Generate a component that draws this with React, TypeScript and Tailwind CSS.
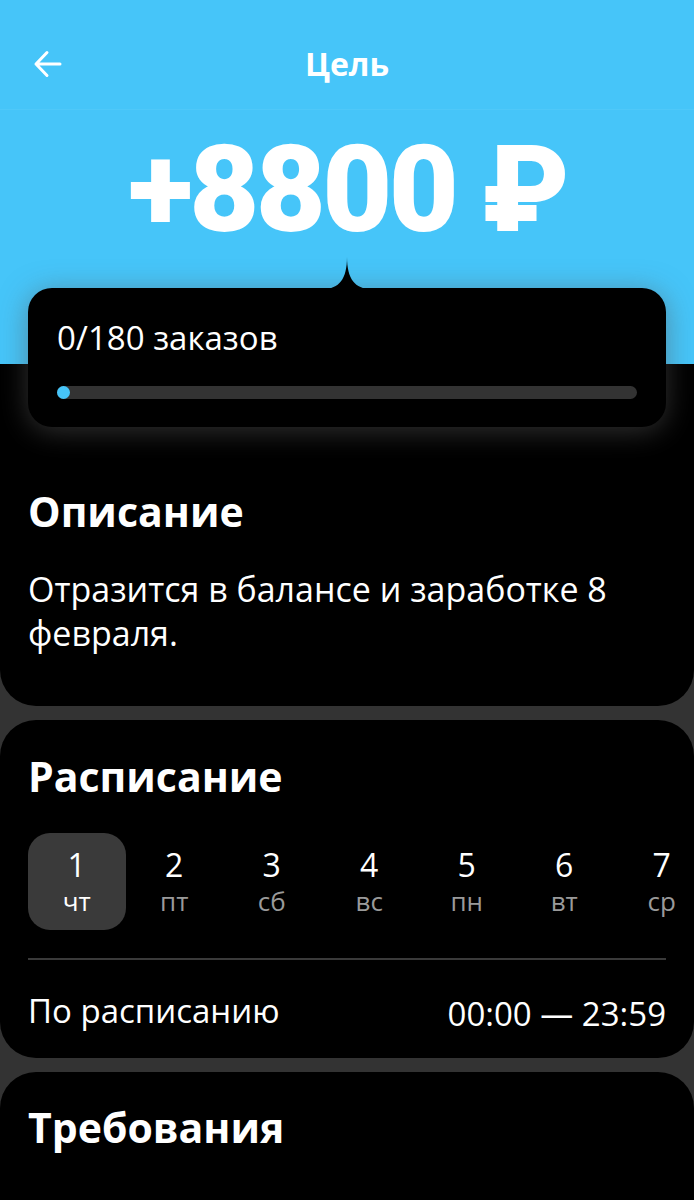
import React from 'react';

const DAYS = [
  { n: '1', d: 'чт' },
  { n: '2', d: 'пт' },
  { n: '3', d: 'сб' },
  { n: '4', d: 'вс' },
  { n: '5', d: 'пн' },
  { n: '6', d: 'вт' },
  { n: '7', d: 'ср' },
];

function BackArrow() {
  return (
    <svg width="30" height="30" viewBox="0 0 30 30" fill="none">
      <path d="M27 15H3M14 3.5L3 15l11 11.5" stroke="white" strokeWidth="3" strokeLinecap="round" strokeLinejoin="round" />
    </svg>
  );
}

export default function App() {
  return (
    <div className="h-[1200px] overflow-hidden bg-[#333333] text-white" style={{ fontFamily: '"Open Sans", "Noto Sans", sans-serif' }}>
      {/* top block: header + progress + description */}
      <div className="bg-black rounded-b-[36px] overflow-hidden">
        <div className="bg-[#46c5f9] pb-[76px]">
          <div className="relative h-[110px] flex items-center justify-center pt-[18px] border-b border-white/5">
            <button className="absolute left-[33px] top-[49px]">
              <BackArrow />
            </button>
            <span className="text-[32px] font-bold leading-none">Цель</span>
          </div>
          <div className="flex justify-center pt-[12px] pb-[30px]">
            <span className="text-[121px] font-black leading-[136px] tracking-[-0.03em]" style={{ fontFamily: 'Roboto, "Open Sans", sans-serif' }}>
              +8800 ₽
            </span>
          </div>
        </div>

        <div className="px-[28px]">
          <div className="relative -mt-[76px] bg-black rounded-[24px] shadow-[0_4px_28px_rgba(90,90,90,0.55)] px-[29px] pt-[30px] pb-[28px]">
            <svg className="absolute -top-[31px] left-[295px]" width="48" height="32" viewBox="0 0 48 32" fill="black">
              <path d="M0 32C16 32 24 22 24 0C24 22 32 32 48 32Z" />
            </svg>
            <div className="text-[33px] leading-[40px]">0/180 заказов</div>
            <div className="mt-[28px] h-[13px] rounded-full bg-[#333333] relative">
              <div className="absolute left-0 top-0 h-[13px] w-[13px] rounded-full bg-[#46c5f9]" />
            </div>
          </div>

          <div className="pt-[60px] pb-[51px]">
            <h2 className="text-[41px] font-bold leading-[48px]">Описание</h2>
            <p className="mt-[32px] text-[34px] leading-[44px]">Отразится в балансе и заработке 8 февраля.</p>
          </div>
        </div>
      </div>

      {/* schedule */}
      <div className="mt-[14px] bg-black rounded-[36px] pl-[28px] pr-[28px] pt-[32px] pb-[24px]">
        <h2 className="text-[41px] font-bold leading-[48px]">Расписание</h2>
        <div className="mt-[33px] -mr-[28px] overflow-hidden">
          <div className="flex">
            {DAYS.map((day, i) => (
              <div
                key={day.n}
                className={
                  'w-[97.5px] h-[97px] shrink-0 flex flex-col items-center justify-center rounded-[22px] ' +
                  (i === 0 ? 'bg-[#3a3a3a]' : '')
                }
              >
                <span className="text-[32px] leading-[38px]">{day.n}</span>
                <span className={'text-[26px] leading-[34px] ' + (i === 0 ? 'text-white' : 'text-[#9a9a9a]')}>{day.d}</span>
              </div>
            ))}
          </div>
        </div>
        <div className="mt-[28px] h-[2px] bg-[#3a3a3a]" />
        <div className="mt-[28px] flex items-center justify-between">
          <span className="text-[33px] leading-[40px]">По расписанию</span>
          <span className="text-[33px] leading-[40px] mt-[6px]">00:00 — 23:59</span>
        </div>
      </div>

      {/* requirements */}
      <div className="mt-[14px] bg-black rounded-[36px] px-[28px] pt-[31px] h-[300px]">
        <h2 className="text-[41px] font-bold leading-[48px]">Требования</h2>
      </div>
    </div>
  );
}
